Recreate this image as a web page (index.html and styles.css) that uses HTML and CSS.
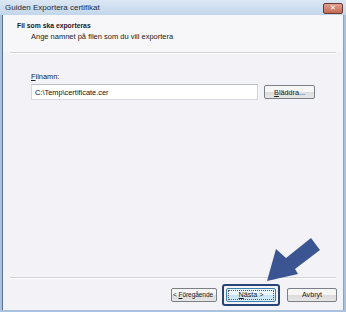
FILE: index.html
```html
<!DOCTYPE html>
<html lang="sv">
  <head>
    <meta charset="UTF-8" />
    <title>Guiden Exportera certifikat</title>
    <link rel="stylesheet" href="styles.css">
  </head>
  <body>
    <div class="window">
      <div class="titlebar">
        <span class="title">Guiden Exportera certifikat</span>
        <span class="close">&#x2715;</span>
      </div>
      <div class="frame">
        <div class="header">
          <div class="heading">Fil som ska exporteras</div>
          <div class="subheading">Ange namnet på filen som du vill exportera</div>
        </div>
        <div class="content">
          <hr class="sep" />
          <div class="field">
            <label for="fileName"><u>F</u>ilnamn:</label>
            <div class="row">
              <input type="text" id="fileName" value="C:\Temp\certificate.cer" />
              <button type="button" class="btn browse"><u>B</u>läddra...</button>
            </div>
          </div>
          <div class="spacer"></div>
          <hr class="sep" />
          <div class="actions">
            <button type="button" class="btn back">&lt; <u>F</u>öregående</button>
            <span class="focus-ring"><button type="button" class="btn next"><u>N</u>ästa &gt;</button></span>
            <button type="button" class="btn">Avbryt</button>
          </div>
        </div>
      </div>
      <svg class="pointer" width="346" height="312" viewBox="0 0 346 312">
        <polygon points="267,281 276,249 286,258 311,238 320,250 295,269 298,274" fill="#3a5591" />
      </svg>
    </div>
  </body>
</html>
```

FILE: styles.css
```css
body {
  margin: 0;
  font-family: "Liberation Sans", Arial, sans-serif;
  font-size: 7.4px;
  color: #1a1a1a;
}
.window {
  position: relative;
  width: 346px;
  height: 312px;
  display: flex;
  flex-direction: column;
  background-color: #a9c3df;
  overflow: hidden;
}
.titlebar {
  height: 15px;
  display: flex;
  align-items: center;
  justify-content: space-between;
  padding: 0 3px 0 5px;
  background: linear-gradient(#dbe7f4, #c2d6eb);
}
.title {
  font-size: 8px;
  color: #1e2a3a;
}
.close {
  width: 20px;
  height: 11px;
  margin-top: 1px;
  border: 1px solid #6d3a33;
  border-radius: 2px;
  background: linear-gradient(#e1a090, #c36a54);
  color: #fff;
  font-family: "DejaVu Sans", sans-serif;
  font-size: 7px;
  font-weight: bold;
  display: flex;
  align-items: center;
  justify-content: center;
  box-sizing: border-box;
}
.frame {
  flex: 1;
  margin: 0 2px 2px 2px;
  display: flex;
  flex-direction: column;
  background-color: #f3f2f6;
  border-left: 1px solid #5c6f8c;
  border-right: 1px solid #8ea3bd;
}
.header {
  background-color: #f7f6f9;
  height: 37px;
  padding: 7px 0 0 14px;
  box-sizing: border-box;
}
.heading {
  font-weight: bold;
  font-size: 6.8px;
  color: #1b1b2a;
}
.subheading {
  margin-top: 3px;
  padding-left: 14px;
  font-size: 7.5px;
}
.content {
  flex: 1;
  display: flex;
  flex-direction: column;
  background-color: #f3f2f6;
}
.sep {
  margin: 0 7px;
  border: none;
  border-top: 1px solid #d2d1d6;
  border-bottom: 1px solid #fff;
}
.field {
  padding: 18px 0 0 28px;
}
label {
  display: block;
  font-size: 7.4px;
  margin-bottom: 3px;
  color: #222;
}
.row {
  display: flex;
  align-items: center;
  gap: 6px;
}
input {
  width: 227px;
  height: 16px;
  box-sizing: border-box;
  border: 1px solid #d4d8de;
  border-top-color: #b9bec6;
  background: #fff;
  font-family: "Liberation Sans", Arial, sans-serif;
  font-size: 7.4px;
  padding: 0 3px;
  color: #111;
}
.btn {
  height: 14px;
  padding: 0;
  border: 1px solid #7b7f86;
  border-radius: 2px;
  background: linear-gradient(#f6f6f6 50%, #dcdcdc 50%, #e6e6e6);
  font-family: "Liberation Sans", Arial, sans-serif;
  font-size: 7.2px;
  color: #1a1a1a;
  width: 50px;
  box-sizing: border-box;
  white-space: nowrap;
  overflow: hidden;
}
.browse {
  width: 51px;
}
.spacer {
  flex: 1;
}
.actions {
  height: 31px;
  display: flex;
  align-items: center;
  justify-content: flex-end;
  padding-right: 6px;
  gap: 7px;
}
.back {
  width: 46px;
  margin-right: -2px;
  padding-left: 1px;
  text-align: left;
  font-size: 6.6px;
  letter-spacing: -0.1px;
}
.focus-ring {
  display: flex;
  padding: 2px;
  border: 2px solid #274477;
  border-radius: 3px;
}
.next {
  border-color: #3c7fb1;
  background: linear-gradient(#eaf6fd 50%, #c7e3f4 50%, #d9eef9);
  outline: 1px dotted #555;
  outline-offset: -3px;
}
.pointer {
  position: absolute;
  left: 0;
  top: 0;
}
```
